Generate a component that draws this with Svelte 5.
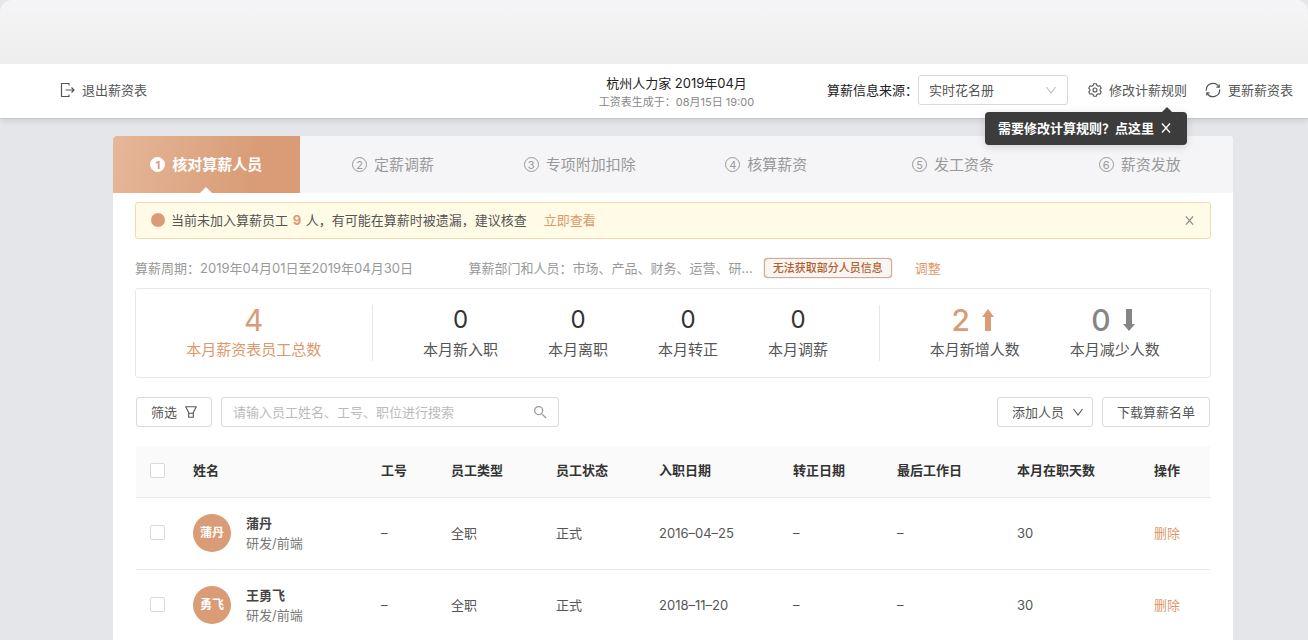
<script lang="ts">
  type Employee = {
    name: string
    avatar: string
    dept: string
    type: string
    status: string
    joined: string
    days: number
  }

  const steps = ['核对算薪人员', '定薪调薪', '专项附加扣除', '核算薪资', '发工资条', '薪资发放']

  const monthly = [
    { label: '本月新入职', value: 0 },
    { label: '本月离职', value: 0 },
    { label: '本月转正', value: 0 },
    { label: '本月调薪', value: 0 },
  ]

  const employees: Employee[] = [
    { name: '蒲丹', avatar: '蒲丹', dept: '研发/前端', type: '全职', status: '正式', joined: '2016–04–25', days: 30 },
    { name: '王勇飞', avatar: '勇飞', dept: '研发/前端', type: '全职', status: '正式', joined: '2018–11–20', days: 30 },
  ]

  let current = $state(0)
  let source = $state('实时花名册')
  let keyword = $state('')
  let showTip = $state(true)
  let showAlert = $state(true)
  let selected = $state(employees.map(() => false))
  let allSelected = $derived(selected.every(Boolean))

  function toggleAll() {
    const next = !allSelected
    selected = selected.map(() => next)
  }
</script>

{#snippet cross(size: number)}
  <svg width={size} height={size} viewBox="0 0 10 10" fill="none" stroke="currentColor" stroke-width="1.3" aria-hidden="true">
    <path d="M1 0.5L9 9.5M9 0.5L1 9.5" />
  </svg>
{/snippet}

{#snippet chevron()}
  <svg class="chevron" width="12" height="12" viewBox="0 0 12 12" fill="none" stroke="currentColor" stroke-width="1.1" aria-hidden="true">
    <path d="M1.5 3L6 9L10.5 3" />
  </svg>
{/snippet}

<div class="page">
  <div class="window-bar"></div>

  <header class="topbar">
    <button class="plain exit">
      <svg width="16" height="16" viewBox="0 0 16 16" fill="none" stroke="currentColor" stroke-width="1.2" aria-hidden="true">
        <path d="M9 3.5V1.5H1.5V14.5H9V12.5M5.5 8H14M11.5 5.5L14 8L11.5 10.5" />
      </svg>
      退出薪资表
    </button>

    <div class="title">
      <h1>杭州人力家 2019年04月</h1>
      <p>工资表生成于：08月15日 19:00</p>
    </div>

    <div class="tools">
      <div class="source">
        <label for="source">算薪信息来源：</label>
        <div class="select">
          <select id="source" bind:value={source}>
            <option>实时花名册</option>
          </select>
          {@render chevron()}
        </div>
      </div>

      <div class="rule">
        <button class="plain">
          <svg width="14" height="14" viewBox="0 0 14 14" fill="none" stroke="currentColor" stroke-width="1.1" stroke-linejoin="round" aria-hidden="true">
            <path d="M5.6 0.8H8.4L8.9 2.5L10.2 3.2L11.9 2.8L13.3 5.2L12.1 6.4V7.6L13.3 8.8L11.9 11.2L10.2 10.8L8.9 11.5L8.4 13.2H5.6L5.1 11.5L3.8 10.8L2.1 11.2L0.7 8.8L1.9 7.6V6.4L0.7 5.2L2.1 2.8L3.8 3.2L5.1 2.5Z" />
            <circle cx="7" cy="7" r="2" />
          </svg>
          修改计薪规则
        </button>
        {#if showTip}
          <div class="tip" role="tooltip">
            需要修改计算规则？点这里
            <button class="plain" aria-label="关闭提示" onclick={() => (showTip = false)}>
              {@render cross(10)}
            </button>
          </div>
        {/if}
      </div>

      <button class="plain">
        <svg width="16" height="16" viewBox="0 0 16 16" fill="none" stroke="currentColor" stroke-width="1.2" aria-hidden="true">
          <path d="M1.4 8.6A6.6 6.6 0 0 1 13.8 4.9M14.6 7.4A6.6 6.6 0 0 1 2.2 11.1" />
          <path d="M14.2 2.4V5.2H11.4M1.8 13.6V10.8H4.6" />
        </svg>
        更新薪资表
      </button>
    </div>
  </header>

  <main>
    <nav class="steps">
      {#each steps as step, i}
        <button class="step" class:active={i === current} onclick={() => (current = i)}>
          <span class="num">{i + 1}</span>
          {step}
        </button>
      {/each}
    </nav>

    <div class="body">
      {#if showAlert}
        <div class="alert">
          <span class="dot"></span>
          <span>当前未加入算薪员工 <b>9</b> 人，有可能在算薪时被遗漏，建议核查</span>
          <a href="#check">立即查看</a>
          <button class="plain" aria-label="关闭" onclick={() => (showAlert = false)}>
            {@render cross(9)}
          </button>
        </div>
      {/if}

      <div class="info">
        <span class="period">算薪周期：2019年04月01日至2019年04月30日</span>
        <span>算薪部门和人员：市场、产品、财务、运营、研...</span>
        <span class="badge">无法获取部分人员信息</span>
        <a href="#adjust">调整</a>
      </div>

      <section class="stats">
        <div class="group total">
          <div class="stat big">
            <strong>4</strong>
            <span>本月薪资表员工总数</span>
          </div>
        </div>
        <div class="group monthly">
          {#each monthly as item}
            <div class="stat">
              <strong>{item.value}</strong>
              <span>{item.label}</span>
            </div>
          {/each}
        </div>
        <div class="group change">
          <div class="stat big up">
            <strong>
              2
              <svg width="12" height="22" viewBox="0 0 12 22" fill="currentColor" aria-hidden="true">
                <path d="M6 0L12 8H9V22H3V8H0Z" />
              </svg>
            </strong>
            <span>本月新增人数</span>
          </div>
          <div class="stat big down">
            <strong>
              0
              <svg width="12" height="22" viewBox="0 0 12 22" fill="currentColor" aria-hidden="true">
                <path d="M6 22L12 15H9V0H3V15H0Z" />
              </svg>
            </strong>
            <span>本月减少人数</span>
          </div>
        </div>
      </section>

      <div class="toolbar">
        <button class="btn">
          筛选
          <svg width="12" height="12" viewBox="0 0 12 12" fill="none" stroke="currentColor" stroke-width="1.1" stroke-linejoin="round" aria-hidden="true">
            <path d="M0.7 0.8H11.3L8.3 6.5V11.2H3.7V6.5ZM3.7 7.2H8.3" />
          </svg>
        </button>
        <div class="search">
          <input type="text" aria-label="搜索员工" placeholder="请输入员工姓名、工号、职位进行搜索" bind:value={keyword} />
          <svg width="14" height="14" viewBox="0 0 14 14" fill="none" stroke="currentColor" stroke-width="1.2" aria-hidden="true">
            <circle cx="5.6" cy="5.6" r="4" />
            <path d="M8.6 8.6L13 13" />
          </svg>
        </div>
        <button class="btn add">添加人员 {@render chevron()}</button>
        <button class="btn">下载算薪名单</button>
      </div>

      <div class="list">
        <table>
          <colgroup>
            <col style="width: 57px" />
            <col style="width: 188px" />
            <col style="width: 70px" />
            <col style="width: 105px" />
            <col style="width: 103px" />
            <col style="width: 134px" />
            <col style="width: 104px" />
            <col style="width: 120px" />
            <col style="width: 137px" />
            <col style="width: 56px" />
          </colgroup>
          <thead>
            <tr>
              <th class="check"><input type="checkbox" aria-label="全选" checked={allSelected} onchange={toggleAll} /></th>
              <th>姓名</th>
              <th>工号</th>
              <th>员工类型</th>
              <th>员工状态</th>
              <th>入职日期</th>
              <th>转正日期</th>
              <th>最后工作日</th>
              <th>本月在职天数</th>
              <th>操作</th>
            </tr>
          </thead>
          <tbody>
            {#each employees as e, i}
              <tr>
                <td class="check"><input type="checkbox" aria-label={e.name} bind:checked={selected[i]} /></td>
                <td>
                  <div class="person">
                    <span class="avatar">{e.avatar}</span>
                    <div>
                      <b>{e.name}</b>
                      <span>{e.dept}</span>
                    </div>
                  </div>
                </td>
                <td>–</td>
                <td>{e.type}</td>
                <td>{e.status}</td>
                <td>{e.joined}</td>
                <td>–</td>
                <td>–</td>
                <td>{e.days}</td>
                <td><a href="#delete">删除</a></td>
              </tr>
            {/each}
          </tbody>
        </table>
      </div>
    </div>
  </main>
</div>

<style>
  :global(body) {
    background: #e5e6ea;
  }

  .page {
    --accent: #d99c76;
    --link: #de986b;
    --text: #555;
    --border: #d9d9d9;
    min-height: 100vh;
    display: flex;
    flex-direction: column;
    font-family: Inter, 'Noto Sans CJK SC', sans-serif;
    font-size: 13px;
    line-height: 20px;
    color: var(--text);
  }

  .page * {
    box-sizing: border-box;
  }

  button,
  input,
  select {
    font: inherit;
    color: inherit;
  }

  button {
    cursor: pointer;
  }

  a {
    color: var(--link);
    text-decoration: none;
  }

  svg {
    display: block;
    flex: none;
  }

  .plain {
    display: flex;
    align-items: center;
    gap: 6px;
    padding: 0;
    border: 0;
    background: none;
    white-space: nowrap;
  }

  .window-bar {
    height: 64px;
    border-radius: 12px 12px 0 0;
    background: linear-gradient(#f5f5f7, #eeeeee);
  }

  .topbar {
    position: relative;
    display: grid;
    grid-template-columns: 1fr auto 1fr;
    align-items: center;
    height: 54px;
    padding: 0 15px 0 60px;
    background: #fff;
    box-shadow:
      0 1px 1px rgba(0, 0, 0, 0.08),
      0 6px 4px -1px rgba(0, 0, 0, 0.06);
  }

  .exit {
    padding-bottom: 2px;
  }

  .title {
    padding-top: 2px;
    text-align: center;
  }

  h1,
  p {
    margin: 0;
    font-weight: 400;
  }

  h1 {
    font-size: 13px;
    color: #222;
  }

  p {
    font-size: 11px;
    line-height: 18px;
    color: #888;
  }

  .tools {
    display: flex;
    justify-content: flex-end;
    align-items: center;
    gap: 18px;
    padding-bottom: 2px;
  }

  .tools .plain {
    gap: 7px;
  }

  .source {
    display: flex;
    align-items: center;
    margin-right: 2px;
    white-space: nowrap;
    color: #222;
  }

  .select {
    position: relative;
    width: 150px;
  }

  select {
    display: block;
    width: 100%;
    height: 30px;
    padding: 0 10px;
    appearance: none;
    border: 1px solid var(--border);
    border-radius: 3px;
    background: #fff;
    color: var(--text);
  }

  .select .chevron {
    position: absolute;
    top: 9px;
    right: 11px;
    color: #bbb;
    pointer-events: none;
  }

  .rule {
    position: relative;
  }

  .tip {
    position: absolute;
    top: 32px;
    right: 0;
    display: flex;
    align-items: center;
    gap: 7px;
    height: 33px;
    padding: 0 16px 1px 13px;
    border-radius: 4px;
    background: #3c3c3c;
    box-shadow: 0 2px 8px rgba(0, 0, 0, 0.15);
    color: #fff;
    font-weight: 700;
    white-space: nowrap;
  }

  .tip::before {
    content: '';
    position: absolute;
    top: -5px;
    right: 14px;
    border: 6px solid transparent;
    border-top: 0;
    border-bottom-color: #3c3c3c;
  }

  main {
    flex: 1;
    margin: 18px 75px 0 113px;
    border-radius: 4px 4px 0 0;
    background: #fff;
  }

  .steps {
    display: grid;
    grid-template-columns: repeat(6, 1fr);
    border-radius: 4px 4px 0 0;
    background: #f5f5f7;
    overflow: hidden;
  }

  .step {
    position: relative;
    display: flex;
    align-items: center;
    justify-content: center;
    gap: 7px;
    height: 57px;
    padding: 0;
    border: 0;
    background: none;
    color: #999;
    font-size: 15px;
  }

  .num {
    display: flex;
    align-items: center;
    justify-content: center;
    width: 15px;
    height: 15px;
    border: 1px solid currentColor;
    border-radius: 50%;
    font-size: 11px;
    line-height: 12px;
  }

  .active {
    background: linear-gradient(100deg, #e5b799, #d99c76 75%);
    color: #fff;
    font-weight: 700;
  }

  .active .num {
    border-color: #fff;
    background: #fff;
    color: var(--accent);
  }

  .active::after {
    content: '';
    position: absolute;
    bottom: 0;
    border: 6px solid transparent;
    border-top: 0;
    border-bottom-color: #fff;
  }

  .body {
    padding: 9px 22px 0;
  }

  .alert {
    display: flex;
    align-items: center;
    height: 37px;
    padding: 0 16px 1px 15px;
    border: 1px solid #f6d9a8;
    border-radius: 3px;
    background: #fffbe6;
  }

  .alert b {
    margin: 0 1px;
    color: var(--link);
  }

  .alert a {
    margin-left: 17px;
  }

  .alert .plain {
    margin-left: auto;
    color: #888;
  }

  .dot {
    width: 14px;
    height: 14px;
    margin-right: 6px;
    border-radius: 50%;
    background: var(--accent);
  }

  .info {
    display: flex;
    align-items: center;
    height: 49px;
    padding-top: 8px;
    color: #999;
    white-space: nowrap;
  }

  .period {
    width: 31%;
  }

  .badge {
    margin: 0 23px 0 11px;
    padding: 0 8px;
    border: 1px solid #d9a98c;
    border-radius: 4px;
    background: #f8f6f4;
    box-shadow: 0 0 1px #888;
    color: #b5602c;
    font-size: 11px;
    line-height: 18px;
    font-weight: 500;
  }

  .stats {
    display: flex;
    height: 90px;
    padding: 16px 0;
    border: 1px solid #e8e8e8;
    border-radius: 3px;
  }

  .group {
    display: flex;
    justify-content: center;
    gap: 50px;
  }

  .total {
    flex: 236 1 0;
  }

  .monthly {
    flex: 507 1 0;
    border: solid #e8e8e8;
    border-width: 0 1px;
  }

  .change {
    flex: 331 1 0;
  }

  .stat {
    display: flex;
    flex-direction: column;
    align-items: center;
    font-size: 15px;
    white-space: nowrap;
  }

  .stat strong {
    display: flex;
    align-items: center;
    gap: 12px;
    height: 30px;
    margin-bottom: 5px;
    color: #333;
    font-size: 24px;
    line-height: 30px;
    font-weight: 400;
  }

  .big strong {
    font-size: 30px;
    color: var(--accent);
  }

  .total .stat {
    color: var(--link);
  }

  .change strong {
    padding-right: 4px;
    font-weight: 500;
  }

  .down strong {
    color: #858585;
  }

  .toolbar {
    display: flex;
    gap: 9px;
    padding: 19px 1px;
  }

  .btn {
    display: flex;
    align-items: center;
    gap: 8px;
    height: 30px;
    padding: 0 14px;
    border: 1px solid var(--border);
    border-radius: 3px;
    background: #fff;
    white-space: nowrap;
  }

  .search {
    position: relative;
    width: 338px;
  }

  .search input {
    display: block;
    width: 100%;
    height: 30px;
    padding: 0 32px 0 11px;
    border: 1px solid var(--border);
    border-radius: 3px;
    background: #fff;
  }

  .search input::placeholder {
    color: #bbb;
  }

  .search svg {
    position: absolute;
    top: 8px;
    right: 12px;
    color: #999;
  }

  .add {
    margin-left: auto;
    padding-right: 8px;
  }

  .list {
    padding: 0 1px;
  }

  table {
    width: 100%;
    table-layout: fixed;
    border-collapse: collapse;
  }

  th,
  td {
    padding: 0;
    border-bottom: 1px solid #e8e8e8;
    text-align: left;
    white-space: nowrap;
  }

  th {
    height: 51px;
    padding-bottom: 2px;
    background: #fafafa;
    color: #333;
    font-weight: 700;
  }

  td {
    height: 72px;
  }

  .check {
    padding-left: 14px;
    padding-bottom: 2px;
  }

  .check input {
    display: block;
    width: 15px;
    height: 15px;
    margin: 0;
    appearance: none;
    border: 1px solid var(--border);
    border-radius: 2px;
    background: #fff;
  }

  .check input:checked {
    border-color: var(--accent);
    background: var(--accent);
  }

  .person {
    display: flex;
    align-items: center;
    gap: 15px;
  }

  .person div {
    display: flex;
    flex-direction: column;
    color: #777;
  }

  .person b {
    color: #444;
    font-weight: 700;
  }

  .avatar {
    display: flex;
    align-items: center;
    justify-content: center;
    width: 38px;
    height: 38px;
    border-radius: 50%;
    background: var(--accent);
    color: #fff;
    font-size: 12px;
    font-weight: 700;
  }
</style>
